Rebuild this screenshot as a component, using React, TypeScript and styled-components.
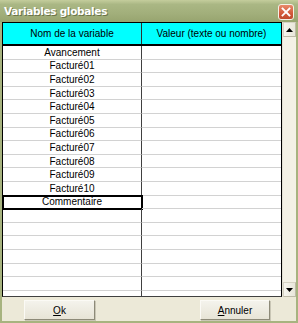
import styled, { createGlobalStyle } from 'styled-components';

const GlobalStyle = createGlobalStyle`
  html, body { margin: 0; padding: 0; background: #ece9d8; }
  body { font-family: "Liberation Sans", Arial, sans-serif; }
  * { box-sizing: border-box; }
`;

const variables = [
  'Avancement',
  'Facturé01',
  'Facturé02',
  'Facturé03',
  'Facturé04',
  'Facturé05',
  'Facturé06',
  'Facturé07',
  'Facturé08',
  'Facturé09',
  'Facturé10',
  'Commentaire',
];
const TOTAL_ROWS = 19;

function App() {
  const rows = Array.from({ length: TOTAL_ROWS }, (_, i) => variables[i] ?? '');

  return (
    <>
      <GlobalStyle />
      <Window>
        <TitleBar>
          <Title>Variables globales</Title>
          <CloseButton>
            <svg width="10" height="10" viewBox="0 0 10 10">
              <path d="M1.5 1.5 L8.5 8.5 M8.5 1.5 L1.5 8.5" stroke="#fff" strokeWidth="1.8" strokeLinecap="square" />
            </svg>
          </CloseButton>
        </TitleBar>
        <Frame>
          <GridArea>
            <Grid>
              <Header>
                <HeaderCell $first>Nom de la variable</HeaderCell>
                <HeaderCell>Valeur (texte ou nombre)</HeaderCell>
              </Header>
              <Body>
                {rows.map((name, i) => (
                  <Row key={i}>
                    <Cell $first $focused={name === 'Commentaire'}>{name}</Cell>
                    <Cell></Cell>
                  </Row>
                ))}
              </Body>
            </Grid>
            <ScrollBar>
              <ScrollButton>
                <svg width="7" height="4" viewBox="0 0 7 4"><path d="M0 4 L3.5 0 L7 4 Z" fill="#000" /></svg>
              </ScrollButton>
              <Track />
              <ScrollButton>
                <svg width="7" height="4" viewBox="0 0 7 4"><path d="M0 0 L7 0 L3.5 4 Z" fill="#000" /></svg>
              </ScrollButton>
            </ScrollBar>
          </GridArea>
          <ButtonBar>
            <DialogButton $width={71}><u>O</u>k</DialogButton>
            <DialogButton $width={70}><u>A</u>nnuler</DialogButton>
          </ButtonBar>
        </Frame>
      </Window>
    </>
  );
}

//*STYLES
const Window = styled.div`
  width: 298px;
  height: 323px;
  display: flex;
  flex-direction: column;
  background: #ece9d8;
  overflow: hidden;
`;

const TitleBar = styled.div`
  height: 22px;
  flex: none;
  display: flex;
  align-items: center;
  justify-content: space-between;
  padding: 0 4px 0 4px;
  background: linear-gradient(#c4cd9c 0%, #aab784 20%, #a2af7b 60%, #97a46f 100%);
`;

const Title = styled.span`
  color: #fff;
  font-family: "DejaVu Sans", "Liberation Sans", sans-serif;
  font-weight: bold;
  font-size: 10.5px;
  letter-spacing: -0.3px;
  text-shadow: 1px 1px 0 #6b7448;
`;

const CloseButton = styled.div`
  width: 16px;
  height: 16px;
  margin-top: 1px;
  display: flex;
  align-items: center;
  justify-content: center;
  border: 1px solid #f4f1e6;
  border-radius: 3px;
  background: linear-gradient(#e88a6a, #d2583a 60%, #c04a2e);
`;

const Frame = styled.div`
  flex: 1;
  min-height: 0;
  display: flex;
  flex-direction: column;
  border: 2px solid #a7b37f;
  border-top: none;
`;

const GridArea = styled.div`
  flex: 1;
  display: flex;
  min-height: 0;
`;

const Grid = styled.div`
  width: 280px;
  min-height: 0;
  display: flex;
  flex-direction: column;
  border: 1px solid #000;
  border-bottom-color: #404040;
  background: #fff;
`;

const Header = styled.div`
  height: 23px;
  flex: none;
  display: grid;
  grid-template-columns: 139px 139px;
  background: #00ffff;
  border-bottom: 2px solid #000;
`;

const HeaderCell = styled.div<{ $first?: boolean }>`
  display: flex;
  align-items: center;
  justify-content: center;
  font-size: 10px;
  color: #000;
  border-right: ${(p) => (p.$first ? '1px solid #303030' : 'none')};
`;

const Body = styled.div`
  flex: 1;
  min-height: 0;
  overflow: hidden;
`;

const Row = styled.div`
  display: grid;
  grid-template-columns: 139px 139px;
  height: 13.6px;
`;

const Cell = styled.div<{ $first?: boolean; $focused?: boolean }>`
  display: flex;
  align-items: center;
  justify-content: center;
  font-size: 10px;
  color: #000;
  border-bottom: 1px solid #d2d2d2;
  border-right: ${(p) => (p.$first ? '1px solid #404040' : 'none')};
  outline: ${(p) => (p.$focused ? '2px solid #000' : 'none')};
  outline-offset: -1px;
`;

const ScrollBar = styled.div`
  width: 14px;
  display: flex;
  flex-direction: column;
  background: #f3f1e6;
  border-left: 1px solid #e2e0d4;
`;

const ScrollButton = styled.div`
  height: 15px;
  flex: none;
  display: flex;
  align-items: center;
  justify-content: center;
  background: linear-gradient(90deg, #f6f5ee, #e8e6da);
  border: 1px solid #d6d3c4;
  border-right-color: #bdbaa8;
  border-bottom-color: #bdbaa8;
`;

const Track = styled.div`
  flex: 1;
`;

const ButtonBar = styled.div`
  height: 24px;
  flex: none;
  display: flex;
  align-items: flex-start;
  justify-content: space-between;
  padding: 3px 26px 0 22px;
  background: #ece9d8;
`;

const DialogButton = styled.div<{ $width: number }>`
  width: ${(p) => p.$width}px;
  height: 20px;
  display: flex;
  align-items: center;
  justify-content: center;
  font-size: 10px;
  color: #000;
  background: linear-gradient(#f4f3ec, #e7e4d6);
  border: 1px solid;
  border-color: #fbfaf5 #8d8a78 #8d8a78 #fbfaf5;
  box-shadow: 1px 1px 0 #c9c6b5;
`;

export default App;
